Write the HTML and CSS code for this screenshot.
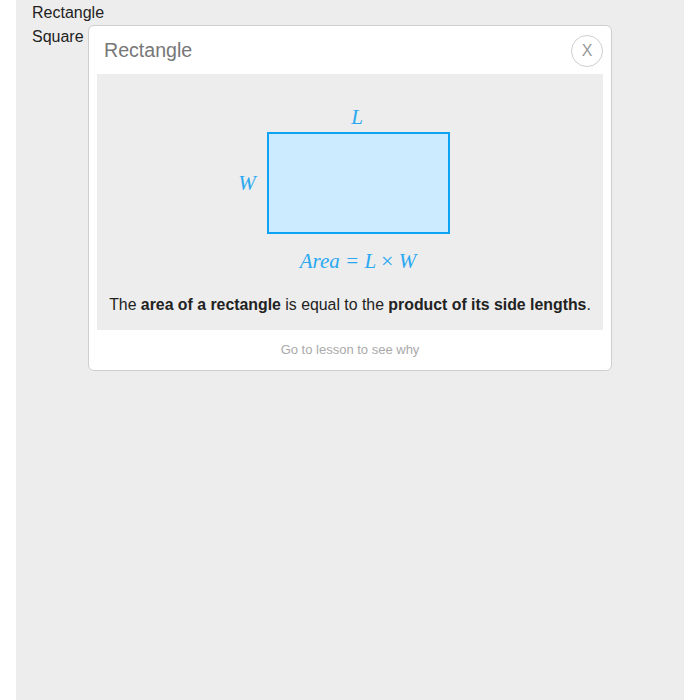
FILE: index.html
```html
<!DOCTYPE html>
<html>
<head>
<meta charset="utf-8">
<link rel="stylesheet" href="styles.css">
</head>
<body>
<div class="page">
  <ul class="list">
    <li>Rectangle</li>
    <li>Square</li>
  </ul>
  <div class="card">
    <div class="card-head">
      <span class="card-title">Rectangle</span>
      <button class="close">X</button>
    </div>
    <div class="card-body">
      <svg class="diagram" width="506" height="219" viewBox="0 0 506 219">
        <rect x="171" y="59" width="181" height="100" fill="#cdebfe" stroke="#0ea2f5" stroke-width="2"/>
        <text x="260" y="50" text-anchor="middle" class="lbl">L</text>
        <text x="150" y="116" text-anchor="middle" class="lbl">W</text>
        <text x="261" y="194" text-anchor="middle" class="lbl">Area = L <tspan class="times">×</tspan> W</text>
      </svg>
      <p class="desc">The <b>area of a rectangle</b> is equal to the <b>product of its side lengths</b>.</p>
    </div>
    <div class="card-foot">Go to lesson to see why</div>
  </div>
</div>
</body>
</html>
```
FILE: styles.css
```css
html, body {
  margin: 0;
  padding: 0;
  background: #fff;
  font-family: "Liberation Sans", Arial, sans-serif;
}
.page {
  position: relative;
  margin: 0 16px;
  height: 700px;
  background: #ededed;
  padding: 1px 16px 0;
}
.list {
  list-style: none;
  margin: 0;
  padding: 0;
  font-size: 16px;
  line-height: 24px;
  color: #222;
}
.card {
  position: absolute;
  left: 72px;
  top: 25px;
  width: 522px;
  background: #fff;
  border: 1px solid #cfcfcf;
  border-radius: 6px;
}
.card-head {
  height: 48px;
  display: flex;
  align-items: center;
  justify-content: space-between;
  padding: 0 8px 0 15px;
}
.card-title {
  font-size: 19.6px;
  color: #777;
  margin-top: 1px;
}
.close {
  width: 32px;
  height: 32px;
  border-radius: 50%;
  border: 1px solid #cfcfcf;
  background: #fff;
  color: #999;
  font-family: "Liberation Sans", Arial, sans-serif;
  font-size: 16px;
  padding: 0;
  display: flex;
  align-items: center;
  justify-content: center;
  margin-top: 1px;
}
.card-body {
  margin: 0 8px;
  background: #ededed;
  padding-bottom: 13px;
}
.diagram {
  display: block;
}
.lbl {
  font-family: "Liberation Serif", "Times New Roman", serif;
  font-style: italic;
  font-size: 21px;
  fill: #2aa8f2;
}
.times {
  font-style: normal;
  font-size: 22px;
}
.desc {
  margin: 0;
  text-align: center;
  font-size: 15.85px;
  line-height: 24px;
  color: #222;
}
.card-foot {
  height: 40px;
  line-height: 40px;
  text-align: center;
  font-size: 13px;
  color: #aaa;
}
```
